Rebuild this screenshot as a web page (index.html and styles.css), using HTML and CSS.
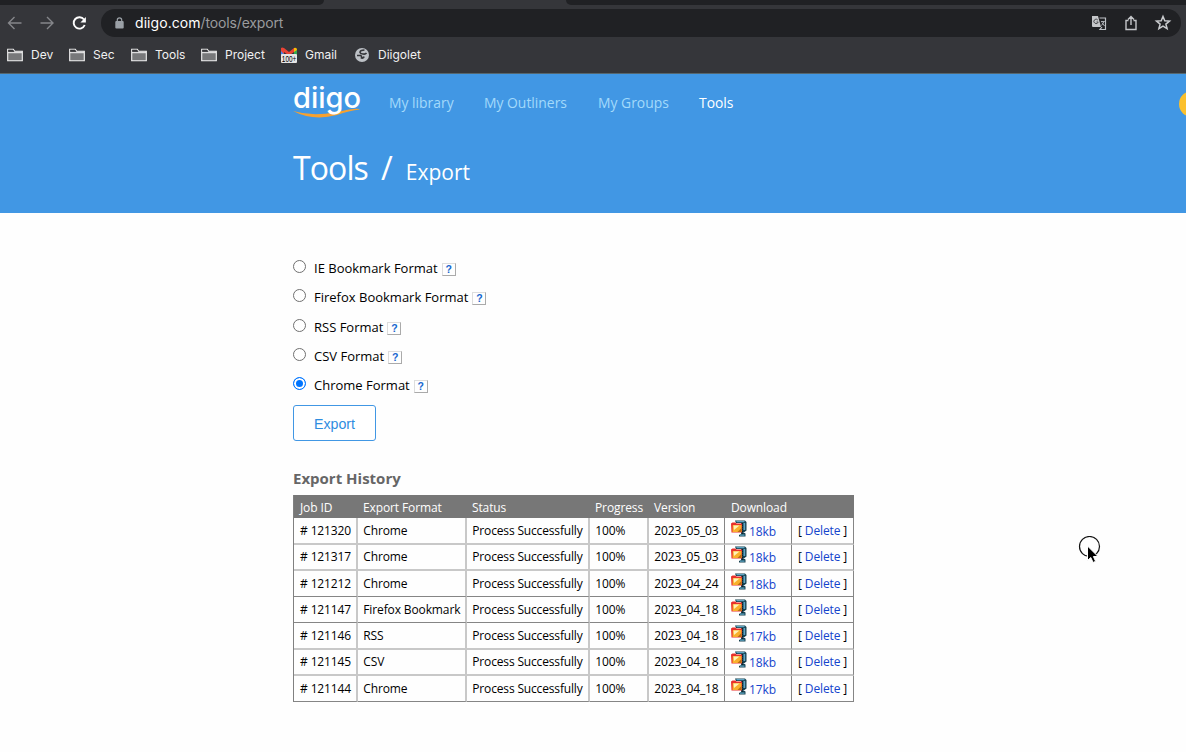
FILE: index.html
```html
<!DOCTYPE html>
<html lang="en">
<head>
<meta charset="utf-8">
<title>Diigo - Export</title>
<link rel="stylesheet" href="styles.css">
</head>
<body>
<svg class="defs" width="0" height="0">
  <symbol id="folder" viewBox="0 0 16 14"><path d="M.7 12.800V1.200h5.600l1.400 2h7.600v9.600z" fill="#77787a" stroke="#f4f4f4" stroke-width="1.1"/><path d="M1.200 1.800h4.800l1.300 2H1.200z" fill="#35363a"/><path d="M1 4.700h14" stroke="#f4f4f4"/></symbol>
  <symbol id="zip" viewBox="0 0 16 17"><path d="M4 .5h10l1.500 1.500v8.500L13.500 12h-1.500l2.500 1.500v3H8v-1.500l2-1V3H5z" fill="#16404f"/><path d="M5 1h8.500v1.200H6zM12.500 3h1.700v7h-1.700zM9 14.500h4.500v1.200H9z" fill="#5fa5c4"/><path d="M11.500 3v11" stroke="#102027" stroke-dasharray="1 1"/><path d="M0 3.500L1.500 2.500h3l1 1H11v9H.5z" fill="#e8302b"/><path d="M1.800 5H10.500v7H1.500z" fill="#f9b02c"/><path d="M2.500 5.500h6L3 10z" fill="#fff3b8"/><path d="M6.500 12l4-4v4z" fill="#b56a14"/></symbol>
</svg>
<header class="browser">
  <div class="tabs"><i class="tab-left"></i><i class="tab-right"></i></div>
  <div class="toolbar">
    <svg class="navicons" width="92" height="24" viewBox="0 0 92 24" fill="none"><path d="M21.500 11H9M14.500 5L8.500 11l6 6M40.500 11H53M47 5l6 6-6 6" stroke="#85868a" stroke-width="1.4"/><path d="M84 7.500A5.700 5.700 0 1 0 84.700 13" stroke="#fff" stroke-width="1.900"/><path d="M85.900 5v5.500h-5.500z" fill="#fff"/></svg>
    <div class="address">
      <svg class="lock" width="9" height="12" viewBox="0 0 9 12"><path d="M2.300 5V3a2.200 2.200 0 0 1 4.400 0v2" fill="none" stroke="#9aa0a6" stroke-width="1.2"/><rect x=".3" y="4" width="8.400" height="7.500" rx="1" fill="#9aa0a6"/></svg>
      <span class="url">diigo.com<span>/tools/export</span></span>
      <svg class="actions" width="82" height="18" viewBox="0 0 82 18" fill="none"><path d="M0 2h6l3 11H1q-1 0-1-1z" fill="#c4c6c9"/><path d="M7.500 4H13.500v11.500H8l2-2.500" stroke="#bdc1c6" stroke-width="1.200"/><path d="M5.800 6A2.200 2.200 0 1 0 6.200 8H4.500" stroke="#4a4b4e"/><path d="M9 7.500h3.800M11.800 8L9.500 11.500M10 8.500l2.500 3.500" stroke="#bdc1c6" stroke-width=".9"/><path d="M36.500 6.500H34v9h10v-9h-2.500M39 11V2.500M36 5.500l3-3 3 3" stroke="#c4c6c9" stroke-width="1.400"/><path d="M71 2.500l1.800 4.300 4.700.3-3.600 3 1.200 4.600-4.100-2.500-4.100 2.500 1.200-4.600-3.600-3 4.700-.3z" stroke="#c9cbce" stroke-width="1.500"/></svg>
    </div>
  </div>
  <nav class="bookmarks">
    <a class="w62"><svg width="16" height="14"><use href="#folder"/></svg><span>Dev</span></a>
    <a class="w62"><svg width="16" height="14"><use href="#folder"/></svg><span>Sec</span></a>
    <a class="w70"><svg width="16" height="14"><use href="#folder"/></svg><span>Tools</span></a>
    <a class="w80"><svg width="16" height="14"><use href="#folder"/></svg><span>Project</span></a>
    <a class="w74"><svg class="gmail" width="16" height="16" viewBox="0 0 16 16"><path d="M0 2v6h3V4z" fill="#4285f4"/><path d="M13 4v4h3V2z" fill="#34a853"/><path d="M0 3V1q1-1 3 0l5 4 5-4v4L8 8.500 3 5v2L0 4z" fill="#ea4335"/><path d="M13 1q3-1 3 2l-3 2z" fill="#fbbc04"/><rect y="7" width="16" height="9" rx="1" fill="#e6e6e6"/><text x=".8" y="15" class="badge" textLength="14.500" lengthAdjust="spacingAndGlyphs">100+</text></svg><span>Gmail</span></a>
    <a><svg width="14" height="14" viewBox="0 0 14 14"><circle cx="7" cy="7" r="7" fill="#bdc1c6"/><path d="M9.500 2Q5 2 5 4.500q.5 1.500 3 1.500 2.500.5 3.500-1M2 7.500h3.500q1.500.5 1 2.500 2 .5 2.500-1.500" fill="none" stroke="#35363a" stroke-width="1.600"/></svg><span class="wide">Diigolet</span></a>
  </nav>
</header>
<section class="hero">
  <nav class="site-nav">
    <svg class="logo" width="70" height="38" viewBox="0 0 70 38"><path d="M0 28Q20 34 43 29T67 26.500Q56 27.500 44 32 20 38.500 0 28z" fill="#f7a12e"/><text class="logo-text" x="0" y="25" textLength="68" lengthAdjust="spacingAndGlyphs">diigo</text></svg>
    <a class="n1">My library</a><a class="n2">My Outliners</a><a class="n3">My Groups</a><a class="active">Tools</a>
  </nav>
  <h1>Tools<span class="slash">/</span><small>Export</small></h1>
  <div class="avatar"></div>
</section>
<main>
  <form>
    <label><i class="radio"></i><span>IE Bookmark Format</span><b>?</b></label>
    <label><i class="radio"></i><span>Firefox Bookmark Format</span><b>?</b></label>
    <label><i class="radio"></i><span>RSS Format</span><b>?</b></label>
    <label><i class="radio"></i><span>CSV Format</span><b>?</b></label>
    <label><i class="radio on"></i><span>Chrome Format</span><b>?</b></label>
    <button type="button">Export</button>
  </form>
  <h2>Export History</h2>
  <table>
    <colgroup><col class="c1"><col class="c2"><col class="c3"><col class="c4"><col class="c5"><col class="c6"><col class="c7"></colgroup>
    <thead><tr><th>Job ID</th><th>Export Format</th><th>Status</th><th>Progress</th><th>Version</th><th>Download</th><th></th></tr></thead>
    <tbody>
      <tr class="soft tall"><td># 121320</td><td>Chrome</td><td>Process Successfully</td><td>100%</td><td>2023_05_03</td><td><div class="dl"><svg width="16" height="17"><use href="#zip"/></svg><a>18kb</a></div></td><td>[ <a>Delete</a> ]</td></tr>
      <tr class="soft"><td># 121317</td><td>Chrome</td><td>Process Successfully</td><td>100%</td><td>2023_05_03</td><td><div class="dl"><svg width="16" height="17"><use href="#zip"/></svg><a>18kb</a></div></td><td>[ <a>Delete</a> ]</td></tr>
      <tr><td># 121212</td><td>Chrome</td><td>Process Successfully</td><td>100%</td><td>2023_04_24</td><td><div class="dl"><svg width="16" height="17"><use href="#zip"/></svg><a>18kb</a></div></td><td>[ <a>Delete</a> ]</td></tr>
      <tr><td># 121147</td><td>Firefox Bookmark</td><td>Process Successfully</td><td>100%</td><td>2023_04_18</td><td><div class="dl"><svg width="16" height="17"><use href="#zip"/></svg><a>15kb</a></div></td><td>[ <a>Delete</a> ]</td></tr>
      <tr class="soft tall"><td># 121146</td><td>RSS</td><td>Process Successfully</td><td>100%</td><td>2023_04_18</td><td><div class="dl"><svg width="16" height="17"><use href="#zip"/></svg><a>17kb</a></div></td><td>[ <a>Delete</a> ]</td></tr>
      <tr class="soft"><td># 121145</td><td>CSV</td><td>Process Successfully</td><td>100%</td><td>2023_04_18</td><td><div class="dl"><svg width="16" height="17"><use href="#zip"/></svg><a>18kb</a></div></td><td>[ <a>Delete</a> ]</td></tr>
      <tr><td># 121144</td><td>Chrome</td><td>Process Successfully</td><td>100%</td><td>2023_04_18</td><td><div class="dl"><svg width="16" height="17"><use href="#zip"/></svg><a>17kb</a></div></td><td>[ <a>Delete</a> ]</td></tr>
    </tbody>
  </table>
</main>
<svg class="cursor" width="26" height="30" viewBox="0 0 26 30"><circle cx="11.500" cy="10.500" r="10" fill="none" stroke="#111" stroke-width="1.200"/><path d="M9.500 10v14.500l3.300-3 2.300 5 2.500-1.200-2.200-4.800h4.600z" fill="#000" stroke="#fff"/></svg>
</body>
</html>
```

FILE: styles.css
```css
* { box-sizing: border-box; }
body { margin: 0; width: 1186px; height: 752px; overflow: hidden; position: relative; background: #fefefe; color: #000; font-family: "Open Sans", sans-serif; }
.defs { position: absolute; }
.browser { height: 74px; background: #35363a; font-family: Inter, sans-serif; color: #f1f1f1; border-bottom: 1px solid #55676f; }
.tabs { height: 5px; display: flex; justify-content: space-between; }
.tab-left { width: 324px; background: #202124; border-bottom-right-radius: 5px; }
.tab-right { width: 620px; background: #202124; border-bottom-left-radius: 5px; }
.toolbar { display: flex; height: 36px; padding-top: 4px; }
.navicons { margin: 3px 9px 0 0; }
.address { width: 1080px; height: 28px; border-radius: 14px; background: #202124; display: flex; align-items: center; padding: 0 7px 0 14px; }
.url { font-size: 14px; margin: -1px 0 0 11px; letter-spacing: .06px; color: #fff; }
.url span { color: #9a9b9e; letter-spacing: -.15px; }
.actions { margin-left: auto; }
.bookmarks { display: flex; height: 27px; padding-left: 7px; font-size: 12px; }
.bookmarks a { display: flex; align-items: center; }
.bookmarks span { margin: -1px 0 0 8px; white-space: nowrap; }
.w62 { width: 62px; }
.w70 { width: 70px; }
.w80 { width: 80px; }
.w74 { width: 74px; }
.bookmarks .wide { margin-left: 9px; }
.gmail { overflow: visible; }
.badge { font: 9.500px "Liberation Sans", sans-serif; fill: #000; }

.hero { height: 139px; background: #4197e4; padding-left: 293px; position: relative; overflow: hidden; color: #fff; }
.site-nav { display: flex; height: 59px; padding-top: 9px; font-size: 13.900px; color: #a3dafb; line-height: 40px; white-space: nowrap; }
.site-nav a { display: block; }
.logo { margin-right: 26px; overflow: visible; }
.logo-text { font: 500 29px Inter, sans-serif; fill: #fff; }
.n1 { width: 95px; }
.n2 { width: 114px; }
.n3 { width: 101px; }
.site-nav .active { color: #fff; }
h1 { margin: 11px 0 0; font-size: 32px; line-height: 48px; font-weight: 400; display: flex; align-items: baseline; letter-spacing: -.9px; }
.slash { margin-left: 13px; }
h1 small { font-size: 21px; margin-left: 14px; letter-spacing: 0; }
.avatar { position: absolute; left: 1179px; top: 17px; width: 26px; height: 26px; border-radius: 50%; background: #fbc02d; }

main { padding: 40px 0 0 293px; }
form { height: 201px; }
label { display: flex; height: 29.450px; align-items: center; font-size: 13px; white-space: nowrap; }
.radio { width: 13px; height: 13px; border: 1px solid #707070; border-radius: 50%; margin: 0 8px 3px 0; background: #fff; }
.radio.on { border-color: #0075ff; background: #0075ff; box-shadow: inset 0 0 0 2px #fff; }
label b { width: 14px; height: 13px; margin: 3px 0 0 4px; border: 1px solid #ddd; border-right: 1px solid #aaa; border-bottom-color: #aaa; color: #1766cf; font: bold 10.500px/11px "Liberation Sans", sans-serif; text-align: center; }
button { display: block; width: 83px; height: 36px; margin-top: 5px; padding: 1px 0 0; border: 1px solid #4197e4; border-radius: 3px; background: #fff; color: #2f8ddf; font: 14.200px "Liberation Sans", sans-serif; }
h2 { margin: 13px 0 6px; height: 22px; line-height: 22px; font-size: 15px; color: #666; }
table { width: 561px; border-collapse: separate; border-spacing: 0; table-layout: fixed; font-size: 12px; letter-spacing: -.12px; border-left: 1px solid #808080; }
.c1 { width: 64px; }
.c2 { width: 109px; }
.c3 { width: 123px; }
.c4 { width: 59px; }
.c5 { width: 76px; }
.c6 { width: 67px; }
.c7 { width: 62px; }
th { height: 23px; padding: 2px 0 0 5px; background: #777; color: #fff; font-weight: 400; text-align: left; line-height: 20px; white-space: nowrap; }
th:first-child, th:nth-child(6) { padding-left: 6px; }
td { height: 26px; padding: 0 0 0 5.300px; line-height: 20px; white-space: nowrap; vertical-align: middle; border-right: 2px solid #c8c8c8; border-bottom: 1px solid #858585; }
td:first-child, td:nth-child(n+6) { padding-left: 6px; }
td:nth-child(3) { letter-spacing: -.16px; }
td:nth-child(n+5) { border-right: 1px solid #858585; }
.soft td { border-bottom: 2px solid #c8c8c8; }
.tall td { height: 27px; }
td a { color: #1444cc; }
.dl { display: flex; height: 22px; }
.dl a { margin: 2px 0 0 2px; }
.cursor { position: absolute; left: 1078px; top: 536px; }
```
